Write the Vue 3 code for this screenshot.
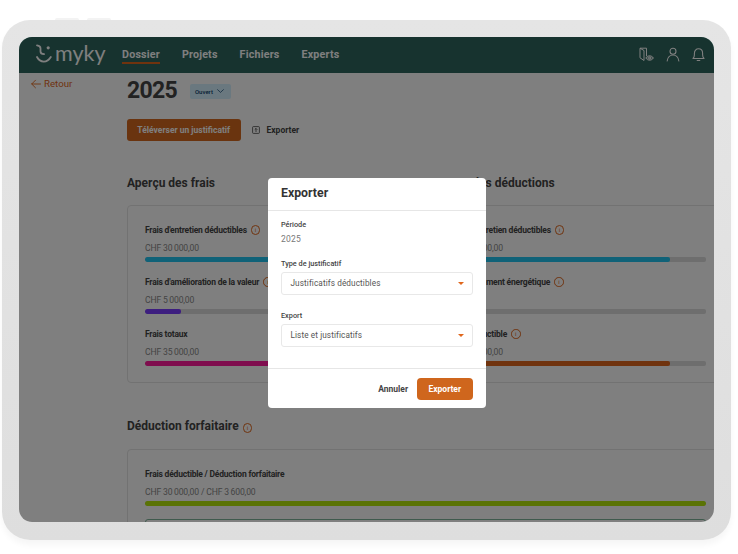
<script setup>
const thin = '\u2009'
const leftRows = [
  { label: "Frais d'entretien déductibles", amount: `CHF 30${thin}000,00`, pct: 100, color: '#20c4f0', info: true },
  { label: "Frais d'amélioration de la valeur", amount: `CHF 5${thin}000,00`, pct: 14, color: '#7a3cff', info: true },
  { label: 'Frais totaux', amount: `CHF 35${thin}000,00`, pct: 100, color: '#ff1a9c', info: false },
]
const rightRows = [
  { label: "Frais d'entretien déductibles", amount: `CHF 30${thin}000,00`, pct: 86, color: '#20c4f0', info: true },
  { label: 'Investissement énergétique', amount: 'CHF 0,00', pct: 0, color: '#7a3cff', info: true },
  { label: 'Total déductible', amount: `CHF 30${thin}000,00`, pct: 86, color: '#e0661c', info: true },
]
const flatAmount = `CHF 30${thin}000,00 / CHF 3${thin}600,00`
const nav = ['Dossier', 'Projets', 'Fichiers', 'Experts']
</script>

<template>
  <div class="stage">
    <div class="device">
      <span class="knob knob-a"></span>
      <span class="knob knob-b"></span>
      <div class="screen">
        <header class="topbar">
          <div class="logo">
            <svg width="16" height="20" viewBox="0 0 16 20" fill="none" stroke="currentColor" stroke-width="1.8" stroke-linecap="round" stroke-linejoin="round">
              <path d="M1 1.300c2.400.2 3.500 1.100 3.500 3v3.200c0 1.800 1.200 2.600 3.600 2.600" />
              <path d="M1 13c1.600 3 3.900 4.600 6.800 4.600 2.900 0 5.200-1.600 7-4.600" />
              <circle cx="12.200" cy="3.800" r="1.600" fill="currentColor" stroke="none" />
            </svg>
            <span class="logo-word">myky</span>
          </div>
          <nav class="nav">
            <a v-for="(item, i) in nav" :key="item" class="nav-item" :class="{ active: i === 0 }">{{ item }}</a>
          </nav>
          <div class="top-icons">
            <svg width="15" height="15" viewBox="0 0 15 15" fill="none" stroke="currentColor" stroke-width="1">
              <path d="M1 1.200h6.500v8M1 1.200v9.600l4 2.700V3.500L1 1.200z" />
              <path d="M6.800 11c.9-1.400 2.300-2.200 3.800-2.200s2.900.8 3.800 2.200c-.9 1.400-2.300 2.200-3.800 2.200S7.700 12.400 6.800 11z" fill="currentColor" fill-opacity=".4" />
              <circle cx="10.600" cy="11" r="1" />
            </svg>
            <svg width="14" height="15" viewBox="0 0 14 15" fill="none" stroke="currentColor" stroke-width="1.100" stroke-linecap="round">
              <circle cx="7" cy="4.300" r="3" />
              <path d="M1.200 14c.4-3.500 2.800-6 5.800-6s5.400 2.500 5.800 6" />
            </svg>
            <svg width="13" height="15" viewBox="0 0 13 15" fill="none" stroke="currentColor" stroke-width="1.100" stroke-linecap="round" stroke-linejoin="round">
              <path d="M1 11.500c1-1 1.400-2 1.400-3.800V6.200C2.400 3.600 4.100 1.800 6.500 1.800s4.100 1.800 4.100 4.400v1.500c0 1.800.4 2.800 1.400 3.800H1z" />
              <path d="M5.200 13.500h2.600" />
            </svg>
          </div>
        </header>

        <main class="page">
          <a class="back">
            <svg width="10" height="10" viewBox="0 0 10 10" fill="none" stroke="currentColor" stroke-width=".9" stroke-linecap="round" stroke-linejoin="round">
              <path d="M9.500 5H.7M4.500 1.200.7 5l3.800 3.800" />
            </svg>
            Retour
          </a>
          <div class="content">
            <div class="title-row">
              <h1 class="year">2025</h1>
              <span class="badge">
                Ouvert
                <svg width="7" height="4" viewBox="0 0 7 4" fill="none" stroke="currentColor" stroke-width=".7"><path d="M.3.400 3.500 3.400 6.700.400" /></svg>
              </span>
            </div>
            <div class="actions">
              <button class="btn-upload">Téléverser un justificatif</button>
              <span class="export-link">
                <svg width="8" height="8" viewBox="0 0 8 8" fill="none" stroke="currentColor" stroke-width=".8">
                  <rect x=".6" y=".6" width="6.800" height="6.800" rx=".8" />
                  <path d="M4 6V2.500M2.700 3.700 4 2.400l1.300 1.300" />
                </svg>
                Exporter
              </span>
            </div>

            <div class="two-cols">
              <section>
                <h2 class="section-title">Aperçu des frais</h2>
                <div class="card">
                  <div v-for="row in leftRows" :key="row.label" class="row">
                    <div class="row-label">
                      {{ row.label }}
                      <span v-if="row.info" class="info">i</span>
                    </div>
                    <div class="row-amount">{{ row.amount }}</div>
                    <div class="track"><div class="fill" :style="{ width: row.pct + '%', background: row.color }"></div></div>
                  </div>
                </div>
              </section>
              <section>
                <h2 class="section-title">Aperçu des déductions</h2>
                <div class="card">
                  <div v-for="row in rightRows" :key="row.label" class="row">
                    <div class="row-label">
                      {{ row.label }}
                      <span v-if="row.info" class="info">i</span>
                    </div>
                    <div class="row-amount">{{ row.amount }}</div>
                    <div class="track"><div class="fill" :style="{ width: row.pct + '%', background: row.color }"></div></div>
                  </div>
                </div>
              </section>
            </div>

            <h2 class="section-title section-flat">Déduction forfaitaire <span class="info info-head">i</span></h2>
            <div class="card card-flat">
              <div class="row">
                <div class="row-label">Frais déductible / Déduction forfaitaire</div>
                <div class="row-amount">{{ flatAmount }}</div>
                <div class="track"><div class="fill fill-green"></div></div>
              </div>
              <div class="note"></div>
            </div>
          </div>
        </main>

        <div class="overlay"></div>

        <div class="modal">
          <div class="modal-head">Exporter</div>
          <div class="modal-body">
            <div class="field-label">Période</div>
            <div class="field-value">2025</div>
            <div class="field-label field-gap-first">Type de justificatif</div>
            <div class="select">Justificatifs déductibles<span class="caret"></span></div>
            <div class="field-label field-gap">Export</div>
            <div class="select">Liste et justificatifs<span class="caret"></span></div>
          </div>
          <div class="modal-foot">
            <button class="btn-cancel">Annuler</button>
            <button class="btn-primary">Exporter</button>
          </div>
        </div>
      </div>
    </div>
  </div>
</template>

<style>
html, body { margin: 0; background: #fff; }
</style>

<style scoped>
.stage {
  width: 738px;
  height: 554px;
  overflow: hidden;
  padding: 19.500px 0 0 2px;
  box-sizing: border-box;
  font-family: Roboto, "Liberation Sans", sans-serif;
}
.device {
  position: relative;
  width: 728.500px;
  height: 520px;
  box-sizing: border-box;
  padding: 17px;
  border-radius: 28px;
  background: linear-gradient(#e5e5e5, #dedede);
  box-shadow: 0 5px 6px rgba(0, 0, 0, .04);
}
.knob {
  position: absolute;
  top: -2px;
  height: 2px;
  background: #f3f3f3;
  border-radius: 2px 2px 0 0;
}
.knob-a { left: 53px; width: 24px; }
.knob-b { left: 85px; width: 24px; }
.screen {
  position: relative;
  width: 694.500px;
  height: 485px;
  border-radius: 13px;
  overflow: hidden;
  background: #fff;
}
.topbar {
  display: flex;
  align-items: center;
  height: 36.500px;
  padding-left: 17px;
  background: #2e665e;
  color: #fff;
}
.logo { display: flex; align-items: center; gap: 3px; width: 86px; flex-shrink: 0; color: #fff; }
.logo svg { margin-top: -1px; }
.logo-word {
  font-family: Lato, Roboto, sans-serif;
  font-size: 21.500px;
  line-height: 24px;
  margin-top: -3px;
}
.nav { display: flex; gap: 22px; }
.nav-item {
  position: relative;
  font-size: 10.700px;
  font-weight: 700;
  letter-spacing: .2px;
  line-height: 14px;
  margin-top: 1px;
  color: #fff;
}
.nav-item.active::after {
  content: '';
  position: absolute;
  left: 0;
  right: 0;
  bottom: -2px;
  height: 2px;
  background: #e0661c;
}
.top-icons {
  margin-left: auto;
  display: flex;
  align-items: center;
  gap: 12px;
  padding-right: 9px;
  margin-top: -1px;
}
.page { display: flex; background: #fff; }
.back {
  flex: 0 0 96px;
  padding-left: 12px;
  margin-top: 5px;
  display: flex;
  align-items: flex-start;
  gap: 3px;
  font-size: 9.700px;
  line-height: 12px;
  color: #e0661c;
}
.back svg { margin-top: 1px; }
.content { flex: 0 0 597px; padding-top: 3px; color: #444; }
.title-row { display: flex; align-items: center; gap: 13px; height: 28px; }
.year { margin: 0; font-size: 23px; font-weight: 700; letter-spacing: -.7px; color: #444; }
.badge {
  display: flex;
  align-items: center;
  gap: 4px;
  box-sizing: border-box;
  width: 41px;
  height: 15px;
  padding: 0 5px;
  border-radius: 2px;
  background: #d4f0ff;
  color: #0b3f6b;
  font-size: 6px;
  font-weight: 500;
  margin-top: 2px;
}
.actions { display: flex; align-items: center; gap: 11px; margin-top: 15px; height: 22px; }
.btn-upload {
  width: 113.500px;
  height: 22px;
  border: 0;
  padding: 0;
  border-radius: 3px;
  background: #d4681e;
  color: #fff;
  font: 700 8.500px Roboto, sans-serif;
}
.export-link {
  display: flex;
  align-items: center;
  gap: 7px;
  font-size: 8.500px;
  font-weight: 700;
  margin-top: -1px;
  color: #444;
}
.two-cols {
  display: grid;
  grid-template-columns: 293px 293px;
  column-gap: 11px;
  margin-top: 33px;
}
.section-title {
  margin: 0 0 13px;
  font-size: 12px;
  font-weight: 700;
  line-height: 18px;
  color: #444;
}
.section-flat { margin: 34px 0 14px; }
.card {
  box-sizing: border-box;
  height: 178px;
  padding: 18px 17px 0;
  border: 1px solid #e4e4e4;
  border-radius: 4px;
}
.card-flat { height: 120px; }
.row { margin-bottom: 14.500px; }
.row-label {
  display: flex;
  align-items: center;
  gap: 4px;
  height: 12px;
  font-size: 8.500px;
  letter-spacing: -.2px;
  font-weight: 700;
  color: #444;
}
.row-amount {
  margin-top: 6px;
  height: 12px;
  line-height: 12px;
  font-size: 8.600px;
  letter-spacing: -.15px;
  color: #888;
}
.track {
  margin-top: 3px;
  height: 4.500px;
  border-radius: 2px;
  background: #dcdcdc;
  overflow: hidden;
}
.fill { height: 100%; border-radius: 2px; }
.fill-green { width: 100%; background: #b4e60a; }
.info {
  display: inline-flex;
  align-items: center;
  justify-content: center;
  box-sizing: border-box;
  width: 9.500px;
  height: 9.500px;
  border: .8px solid #e0661c;
  border-radius: 50%;
  color: #e0661c;
  font-size: 6px;
  font-weight: 400;
  letter-spacing: 0;
  line-height: 1;
  vertical-align: middle;
}
.info-head { margin-left: 1px; margin-top: 2px; }
.note {
  height: 40px;
  margin-top: -1px;
  border: 1px solid #7fb59a;
  border-radius: 3px;
}
.overlay {
  position: absolute;
  inset: 0;
  background: rgba(0, 0, 0, .5);
}
.modal {
  position: absolute;
  left: 249px;
  top: 141px;
  width: 217.500px;
  height: 230px;
  display: flex;
  flex-direction: column;
  border-radius: 4px;
  background: #fff;
  color: #333;
}
.modal-head {
  height: 33px;
  box-sizing: border-box;
  padding: 6px 13px 0;
  line-height: 18px;
  font-size: 12.300px;
  font-weight: 700;
  border-bottom: 1px solid #e6e6e6;
}
.modal-body {
  flex: 1;
  padding: 9px 13px 0;
}
.field-label {
  height: 10px;
  line-height: 10px;
  font-size: 7.300px;
  font-weight: 500;
  color: #444;
}
.field-gap-first { margin-top: 14.500px; }
.field-gap { margin-top: 16.500px; }
.field-value {
  margin-top: 3px;
  height: 12px;
  line-height: 12px;
  font-size: 8.500px;
  letter-spacing: .2px;
  color: #777;
}
.select {
  box-sizing: border-box;
  position: relative;
  height: 22.500px;
  margin-top: 3px;
  padding-left: 8.500px;
  line-height: 20px;
  border: 1px solid #e8e8e8;
  border-radius: 3px;
  font-size: 8.200px;
  letter-spacing: .1px;
  color: #555;
}
.caret {
  position: absolute;
  right: 8px;
  top: 8.500px;
  width: 0;
  height: 0;
  border-left: 3px solid transparent;
  border-right: 3px solid transparent;
  border-top: 3.300px solid #e0661c;
}
.modal-foot {
  height: 40px;
  box-sizing: border-box;
  display: flex;
  align-items: flex-start;
  justify-content: flex-end;
  gap: 9px;
  padding: 9px 13px 0;
  border-top: 1px solid #e6e6e6;
}
.btn-cancel {
  height: 22px;
  border: 0;
  padding: 0;
  background: none;
  color: #444;
  font: 700 8.500px Roboto, sans-serif;
}
.btn-primary {
  width: 55.500px;
  height: 22px;
  border: 0;
  padding: 0;
  border-radius: 4px;
  background: #cf661d;
  color: #fff;
  font: 700 8.500px Roboto, sans-serif;
}
</style>
